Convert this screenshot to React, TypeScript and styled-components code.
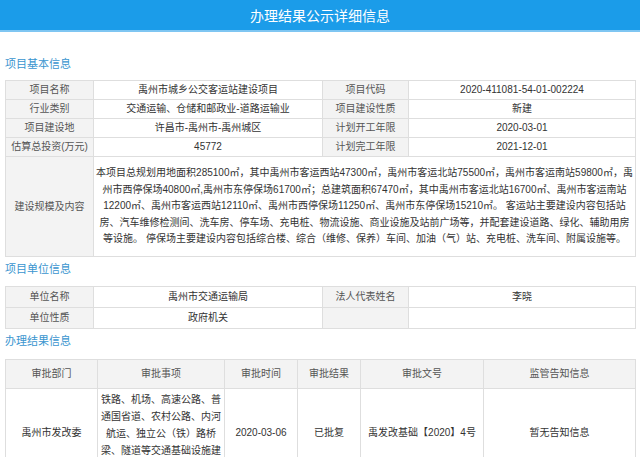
import React from 'react';
import styled, { createGlobalStyle } from 'styled-components';

const Global = createGlobalStyle`
  body {
    margin: 0;
    background: #fff;
    font-family: "Liberation Sans", "Noto Sans CJK SC", sans-serif;
    color: #333;
  }
`;

const Header = styled.div`
  height: 30px;
  background: #1b9ce9;
  color: #fff;
  font-size: 14px;
  display: flex;
  align-items: center;
  justify-content: center;
  border-bottom: 2px solid #7fc6f2;
`;

const Body = styled.div`
  padding: 0 4px 0 5px;
`;

const SectionTitle = styled.div<{ $top: number; $bottom: number }>`
  color: #3a95cf;
  font-size: 11px;
  line-height: 14px;
  padding-top: ${(p) => p.$top}px;
  padding-bottom: ${(p) => p.$bottom}px;
`;

const Table = styled.table`
  width: 100%;
  border-collapse: collapse;
  table-layout: fixed;
  font-size: 10px;
`;

const Cell = styled.td<{ $label?: boolean; $h?: number }>`
  border: 1px solid #dedede;
  text-align: center;
  padding: 0 2px;
  height: ${(p) => p.$h ?? 18}px;
  line-height: 14px;
  background: ${(p) => (p.$label ? '#f3f3f3' : '#fff')};
  color: ${(p) => (p.$label ? '#555' : '#333')};
  white-space: ${(p) => (p.$label ? 'nowrap' : 'normal')};
`;

const InfoCols = () => (
  <colgroup>
    <col style={{ width: 88 }} />
    <col style={{ width: 229 }} />
    <col style={{ width: 86 }} />
    <col />
  </colgroup>
);

const basic = [
  ['项目名称', '禹州市城乡公交客运站建设项目', '项目代码', '2020-411081-54-01-002224'],
  ['行业类别', '交通运输、仓储和邮政业-道路运输业', '项目建设性质', '新建'],
  ['项目建设地', '许昌市-禹州市-禹州城区', '计划开工年限', '2020-03-01'],
  ['估算总投资(万元)', '45772', '计划完工年限', '2021-12-01'],
];

const scale =
  '本项目总规划用地面积285100㎡，其中禹州市客运西站47300㎡，禹州市客运北站75500㎡，禹州市客运南站59800㎡，禹州市西停保场40800㎡,禹州市东停保场61700㎡；总建筑面积67470㎡，其中禹州市客运北站16700㎡、禹州市客运南站12200㎡、禹州市客运西站12110㎡、禹州市西停保场11250㎡、禹州市东停保场15210㎡。 客运站主要建设内容包括站房、汽车维修检测间、洗车房、停车场、充电桩、物流设施、商业设施及站前广场等，并配套建设道路、绿化、辅助用房等设施。 停保场主要建设内容包括综合楼、综合（维修、保养）车间、加油（气）站、充电桩、洗车间、附属设施等。';

export default function App() {
  return (
    <>
      <Global />
      <Header>办理结果公示详细信息</Header>
      <Body>
        <SectionTitle $top={25} $bottom={9}>项目基本信息</SectionTitle>
        <Table>
          <InfoCols />
          <tbody>
            {basic.map((r) => (
              <tr key={r[0]}>
                <Cell $label>{r[0]}</Cell>
                <Cell>{r[1]}</Cell>
                <Cell $label>{r[2]}</Cell>
                <Cell>{r[3]}</Cell>
              </tr>
            ))}
            <tr>
              <Cell $label $h={99}>建设规模及内容</Cell>
              <Cell colSpan={3} $h={99} style={{ lineHeight: '16.5px' }}>{scale}</Cell>
            </tr>
          </tbody>
        </Table>
        <SectionTitle $top={5} $bottom={10}>项目单位信息</SectionTitle>
        <Table>
          <InfoCols />
          <tbody>
            <tr>
              <Cell $label $h={20}>单位名称</Cell>
              <Cell>禹州市交通运输局</Cell>
              <Cell $label>法人代表姓名</Cell>
              <Cell>李晓</Cell>
            </tr>
            <tr>
              <Cell $label $h={20}>单位性质</Cell>
              <Cell>政府机关</Cell>
              <Cell $label></Cell>
              <Cell></Cell>
            </tr>
          </tbody>
        </Table>
        <SectionTitle $top={5} $bottom={11}>办理结果信息</SectionTitle>
        <Table>
          <colgroup>
            <col style={{ width: 92 }} />
            <col style={{ width: 127 }} />
            <col style={{ width: 73 }} />
            <col style={{ width: 63 }} />
            <col style={{ width: 123 }} />
            <col />
          </colgroup>
          <tbody>
            <tr>
              {['审批部门', '审批事项', '审批时间', '审批结果', '审批文号', '监管告知信息'].map((h) => (
                <Cell key={h} $label $h={28}>{h}</Cell>
              ))}
            </tr>
            <tr>
              <Cell>禹州市发改委</Cell>
              <Cell $h={88} style={{ lineHeight: '17px', padding: '0 1px' }}>
                铁路、机场、高速公路、普通国省道、农村公路、内河航运、独立公（铁）路桥梁、隧道等交通基础设施建设项目可行性研究报告审批
              </Cell>
              <Cell>2020-03-06</Cell>
              <Cell>已批复</Cell>
              <Cell>禹发改基础【2020】4号</Cell>
              <Cell>暂无告知信息</Cell>
            </tr>
          </tbody>
        </Table>
      </Body>
    </>
  );
}
